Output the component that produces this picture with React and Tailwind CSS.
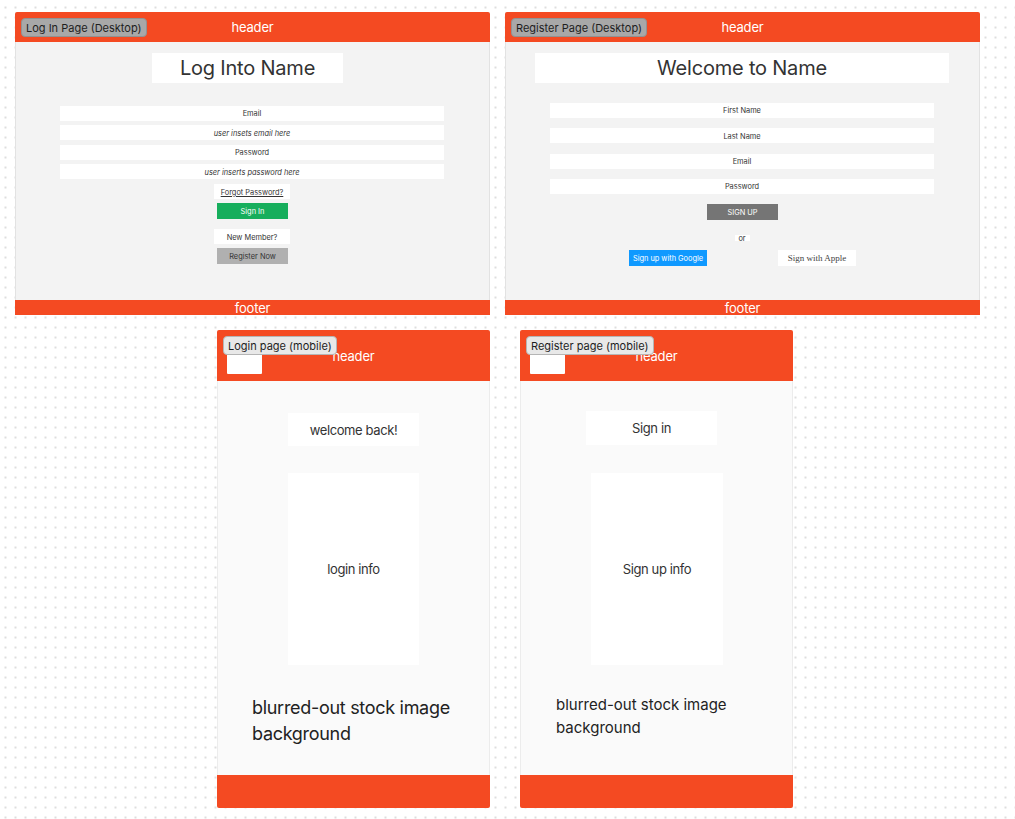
function Tag({ children, dark }) {
  return (
    <div
      className={`absolute left-[6px] top-[6px] z-10 h-[19px] px-[4px] pt-[1px] flex items-center whitespace-nowrap rounded-[4px] border text-[11px] text-[#1e1e1e] ${
        dark ? "bg-[#a8a8a8] border-[#929292]" : "bg-[#e8e8e8] border-[#b5b5b5]"
      }`}
    >
      {children}
    </div>
  )
}

function Field({ children, italic }) {
  return (
    <div className={`h-[15px] pt-[1px] w-full bg-white flex items-center justify-center text-[7.4px] text-[#333] ${italic ? "italic" : ""}`}>
      {children}
    </div>
  )
}

function Btn({ children, className }) {
  return (
    <div className={`h-[16px] flex items-center justify-center text-[7.4px] ${className}`}>
      {children}
    </div>
  )
}

function DesktopFrame({ tag, className, children }) {
  return (
    <div className={`absolute top-[12px] w-[475px] h-[303px] flex flex-col ${className}`}>
      <Tag dark>{tag}</Tag>
      <div className="h-[30px] pt-[2px] bg-[#f44a22] rounded-t-[2px] flex items-center justify-center text-[13px] tracking-[-0.2px] text-white">
        header
      </div>
      <div className="flex-1 bg-[#f3f3f3] border-x border-[#e2e2e2] flex flex-col items-center">
        {children}
      </div>
      <div className="h-[15px] pt-[2px] bg-[#f44a22] flex items-center justify-center text-[13px] tracking-[-0.2px] text-white">
        footer
      </div>
    </div>
  )
}

function MobileFrame({ tag, className, children }) {
  return (
    <div className={`absolute top-[330px] w-[273px] h-[478px] flex flex-col ${className}`}>
      <Tag>{tag}</Tag>
      <div className="relative h-[51px] pt-[2px] bg-[#f44a22] rounded-t-[2px] flex items-center justify-center text-[13px] tracking-[-0.2px] text-white">
        <div className="absolute left-[10px] bottom-[7px] w-[35px] h-[24px] bg-white rounded-[1px]" />
        header
      </div>
      <div className="flex-1 bg-[#fafafa] border-x border-[#ececec] flex flex-col">
        {children}
      </div>
      <div className="h-[33px] bg-[#f44a22] rounded-b-[2px]" />
    </div>
  )
}

function LoginDesktop() {
  return (
    <DesktopFrame tag="Log In Page (Desktop)" className="left-[15px]">
      <div className="mt-[11px] w-[191px] h-[30px] mr-[10px] bg-white flex items-center justify-center text-[20px] tracking-[-0.2px] text-[#333]">
        Log Into Name
      </div>
      <div className="mt-[23px] mr-[1px] w-[384px] flex flex-col gap-[4.4px]">
        <Field>Email</Field>
        <Field italic>user insets email here</Field>
        <Field>Password</Field>
        <Field italic>user inserts password here</Field>
      </div>
      <div className="mt-[5px] mr-[1px] w-[76px] h-[15px] pt-[1px] bg-white flex items-center justify-center text-[7.4px] text-[#333] underline">
        Forgot Password?
      </div>
      <Btn className="mt-[4px] w-[71px] bg-[#16ae5c] text-white">Sign In</Btn>
      <div className="mt-[10px] mr-[1px] w-[76px] h-[15px] pt-[1px] bg-white flex items-center justify-center text-[7.4px] text-[#333]">
        New Member?
      </div>
      <Btn className="mt-[4px] w-[71px] bg-[#b0b0b0] text-[#333]">Register Now</Btn>
    </DesktopFrame>
  )
}

function RegisterDesktop() {
  return (
    <DesktopFrame tag="Register Page (Desktop)" className="left-[505px]">
      <div className="mt-[11px] mr-[1px] w-[414px] h-[30px] bg-white flex items-center justify-center text-[20px] tracking-[-0.2px] text-[#333]">
        Welcome to Name
      </div>
      <div className="mt-[20px] mr-[1px] w-[384px] flex flex-col gap-[10.3px]">
        <Field>First Name</Field>
        <Field>Last Name</Field>
        <Field>Email</Field>
        <Field>Password</Field>
      </div>
      <Btn className="mt-[10px] pt-[1px] w-[71px] bg-[#757575] text-white">SIGN UP</Btn>
      <div className="mt-[15px] mr-[1px] w-[15px] h-[6px] pt-[1px] bg-white flex items-center justify-center text-[7.4px] text-[#333]">
        or
      </div>
      <div className="mt-[9px] flex gap-[71px]">
        <Btn className="w-[78px] pt-[1px] bg-[#0f99ff] text-white">Sign up with Google</Btn>
        <Btn className="w-[78px] pt-[1px] bg-white text-[#444] !text-[9px] font-['Liberation_Serif',serif]">Sign with Apple</Btn>
      </div>
    </DesktopFrame>
  )
}

function LoginMobile() {
  return (
    <MobileFrame tag="Login page (mobile)" className="left-[217px]">
      <div className="mt-[32px] ml-[70px] w-[131px] h-[33px] pt-[2px] bg-white flex items-center justify-center text-[13px] tracking-[-0.4px] text-[#333]">
        welcome back!
      </div>
      <div className="mt-[27px] ml-[70px] w-[131px] h-[192px] pt-[2px] bg-white flex items-center justify-center text-[13px] tracking-[-0.4px] text-[#333]">
        login info
      </div>
      <p className="mt-[30px] ml-[34px] w-[220px] text-[18px] tracking-[-0.3px] leading-[26px] text-[#222]">
        blurred-out stock image background
      </p>
    </MobileFrame>
  )
}

function RegisterMobile() {
  return (
    <MobileFrame tag="Register page (mobile)" className="left-[520px]">
      <div className="mt-[30px] ml-[65px] w-[131px] h-[34px] pt-[2px] bg-white flex items-center justify-center text-[13px] tracking-[-0.4px] text-[#333]">
        Sign in
      </div>
      <div className="mt-[28px] ml-[70px] w-[132px] h-[192px] pt-[2px] bg-white flex items-center justify-center text-[13px] tracking-[-0.4px] text-[#333]">
        Sign up info
      </div>
      <p className="mt-[28px] ml-[35px] w-[190px] text-[15px] leading-[23px] text-[#222]">
        blurred-out stock image background
      </p>
    </MobileFrame>
  )
}

export default function App() {
  return (
    <div className="relative w-[1015px] h-[819px] overflow-hidden bg-white font-['Inter',sans-serif] bg-[radial-gradient(circle,#dcdcdc_0.7px,transparent_0.8px)] bg-[size:10px_10px] bg-[position:0.5px_2.5px]">
      <LoginDesktop />
      <RegisterDesktop />
      <LoginMobile />
      <RegisterMobile />
    </div>
  )
}
